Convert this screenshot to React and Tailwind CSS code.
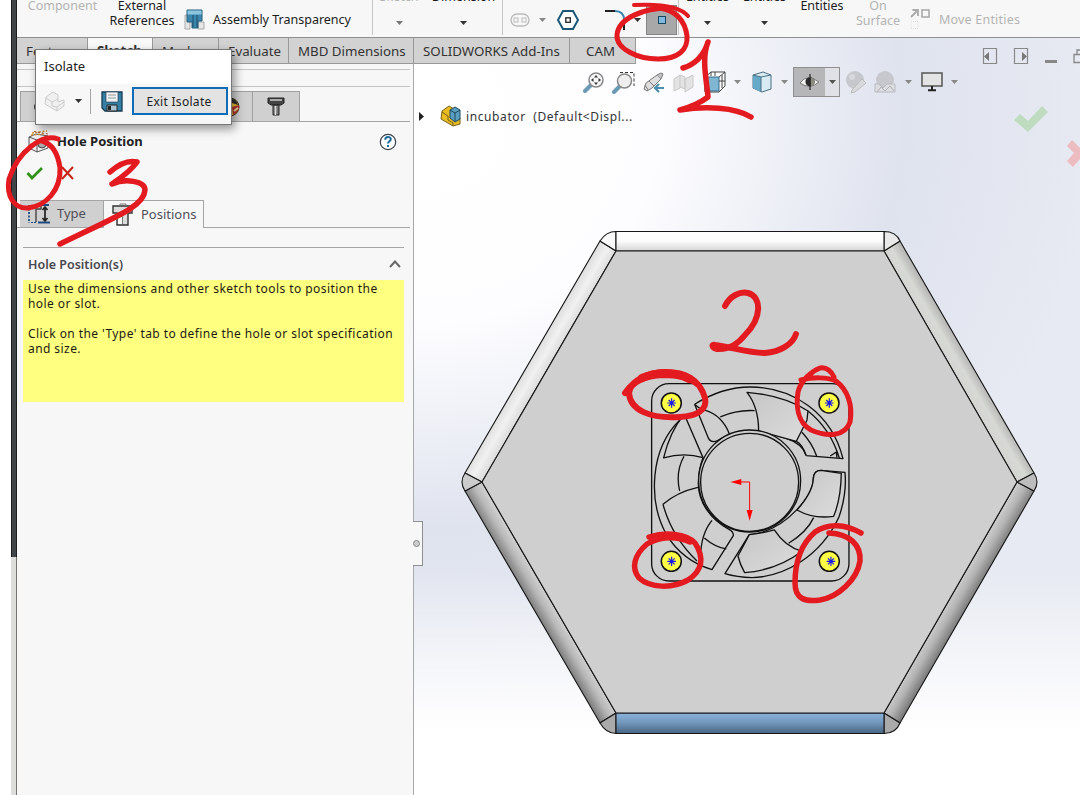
import React from "react";

const Caret = ({ c = "#333", className = "" }) => (
  <svg width="7" height="4" viewBox="0 0 7 4" className={"shrink-0 " + className}><path d="M0 0H7L3.5 4Z" fill={c} /></svg>
);

/* Ribbon cell: one or two caption lines, with an optional caret below */
const Cell = ({ w, children }) => <div className={"flex shrink-0 flex-col items-center whitespace-nowrap " + w}>{children}</div>;

function Ribbon() {
  return (
    <div className="flex h-[38px] shrink-0 overflow-hidden border-b border-[#8f8f8f] bg-[#f7f7f7] text-[12.5px] leading-[15px] text-[#1c1c1c]">
      <Cell w="w-[91px] -mt-[2px] text-[#b4b4b4]"><span>Component</span></Cell>
      <Cell w="w-[68px] -mt-[2px]"><span>External</span><span>References</span></Cell>
      <svg className="ml-[8px] mt-[8px] shrink-0" width="22" height="23" viewBox="0 0 22 23">
        <path d="M1 7h5v14H1zM14 14h6v7h-6z" fill="#e6e6e6" stroke="#aaa" />
        <path d="M3 2h15v11h-4v7H8v-6H3z" fill="#3d87ae" stroke="#245c7a" />
        <path d="M3.500 2.500h14v4h-14z" fill="#8cc6df" /><path d="M9 7v12M13 7v12" stroke="#1d4c66" />
      </svg>
      <span className="ml-[7px] mt-[12px] w-[136px] whitespace-nowrap">Assembly Transparency</span>
      <div className="ml-[23px] h-[35px] w-px shrink-0 bg-[#c6c6c6]" />
      <Cell w="w-[52px] -mt-[11px] text-[#b4b4b4]"><span>Sketch</span><Caret c="#777" className="mt-[17px]" /></Cell>
      <Cell w="w-[77px] -mt-[11px]"><span>Dimension</span><Caret className="mt-[17px]" /></Cell>
      <div className="h-[35px] w-px shrink-0 bg-[#c6c6c6]" />
      <div className="flex h-[40px] w-[143px] shrink-0 items-center pl-[7px]">
        <svg width="20" height="14" viewBox="0 0 20 14" fill="none" stroke="#bcbcbc"><rect x="1" y="1" width="18" height="12" rx="6" strokeWidth="1.4" /><rect x="4" y="5" width="4" height="4" /><rect x="12" y="5" width="4" height="4" /></svg>
        <Caret c="#888" className="ml-[9px]" />
        <svg className="ml-[11px]" width="22" height="20" viewBox="0 0 22 20"><path d="M6 1h10l5 9-5 9H6L1 10Z" fill="#fff" stroke="#1b5878" strokeWidth="2" /><rect x="8.8" y="7.8" width="4.5" height="4.5" fill="none" stroke="#222" strokeWidth="1.3" /></svg>
        <svg className="ml-[25px]" width="22" height="22" viewBox="0 0 22 22" fill="none"><path d="M1 2h10" stroke="#222" strokeWidth="2" /><path d="M11 2c6 0 9 3 9 9" stroke="#3b86ad" strokeWidth="2" /><path d="M20 11v10" stroke="#222" strokeWidth="2" /></svg>
        <Caret className="ml-[8px]" />
      </div>
      <div className="mt-[5px] flex h-[30px] w-[31px] shrink-0 items-center justify-center border border-[#858585] bg-[#a8a8a8]">
        <div className="h-[8px] w-[8px] border border-[#17465f] bg-[#7fb9dd]" />
      </div>
      <div className="ml-[1px] h-[35px] w-px shrink-0 bg-[#c6c6c6]" />
      <Cell w="w-[57px] -mt-[11px]"><span>Entities</span><Caret className="mt-[17px]" /></Cell>
      <Cell w="w-[57px] -mt-[11px]"><span>Entities</span><Caret className="mt-[17px]" /></Cell>
      <Cell w="w-[58px] -mt-[2px]"><span>Entities</span></Cell>
      <Cell w="w-[54px] -mt-[2px] text-[#b4b4b4]"><span>On</span><span>Surface</span></Cell>
      <svg className="ml-[4px] mt-[8px] shrink-0" width="24" height="23" viewBox="0 0 24 23" fill="none" stroke="#aaa"><path d="M2 9 8 3M3.500 2H9v6" strokeWidth="1.8" /><rect x="13" y="2" width="7" height="7" strokeWidth="1.6" /><rect x="2" y="13.500" width="7" height="7" stroke="#ddd" strokeDasharray="1 1" /></svg>
      <span className="ml-[6px] mt-[12px] whitespace-nowrap tracking-[0.2px] text-[#b4b4b4]">Move Entities</span>
    </div>
  );
}

const Tab = ({ w, active, children }) => (
  <div className={"flex h-full shrink-0 items-center whitespace-nowrap border-r pl-[9px] pt-[2px] " + w + (active ? " border-[#999] bg-[#f9f9f9] font-bold" : " border-b border-[#999] bg-[#d2d2d2]")}>{children}</div>
);

function TabBar() {
  return (
    <div className="flex h-[26px] shrink-0 text-[13.3px] text-[#333]">
      <Tab w="w-[71px]">Features</Tab>
      <Tab w="w-[65px]" active>Sketch</Tab>
      <Tab w="w-[66px]">Markup</Tab>
      <Tab w="w-[70px]">Evaluate</Tab>
      <Tab w="w-[125px]">MBD Dimensions</Tab>
      <Tab w="w-[156px]">SOLIDWORKS Add-Ins</Tab>
      <Tab w="w-[66px] !pl-[16px]">CAM</Tab>
    </div>
  );
}

function PropertyPanel() {
  return (
    <div className="relative flex w-[397px] shrink-0 flex-col border-r border-[#a9a9a9] bg-[#f7f7f7]">
      <div className="mr-[3px] h-[6px] border-b border-[#c4c4c4]" />
      <div className="mr-[3px] h-[17px] border-b border-[#c4c4c4]" />
      <div className="mr-[3px] flex h-[35px] items-end border-b border-[#a5a5a5] pl-[3px]">
        <div className="flex h-[30px] border border-b-0 border-[#a0a0a0] bg-[#d0d0d0]">
          <div className="flex w-[186px] items-center pl-[13px]"><div className="h-[12px] w-[12px] rounded-full bg-[#333]" /></div>
          <div className="flex w-[46px] items-center justify-center border-r border-[#a0a0a0]">
            <svg width="22" height="22" viewBox="0 0 22 22"><circle cx="11" cy="11" r="9" fill="#e7bd34" stroke="#39301e" /><path d="M13 11 20 9A9 9 0 0 1 14 19Z" fill="#b5342c" /><path d="M11 2A9 9 0 0 1 19 9L13 7Z" fill="#33302c" /><path d="M15 15l4-3" stroke="#f0dca0" strokeWidth="2" /></svg>
          </div>
          <div className="flex w-[46px] items-center justify-center">
            <svg width="18" height="20" viewBox="0 0 18 20"><path d="M1 1h16v5l-3 2H4L1 6Z" fill="#444" stroke="#222" /><path d="M3 3h12" stroke="#aaa" strokeWidth="2" /><path d="M6 8h6v10H6Z" fill="#777" stroke="#222" /><path d="M8.500 9v9" stroke="#ddd" strokeWidth="1.500" /></svg>
          </div>
        </div>
      </div>
      <div className="flex h-[39px] items-center pl-[11px] pr-[16px]">
        <svg width="22" height="23" viewBox="0 0 22 23" fill="none"><path d="M1 7 8 4 20 6v12l-11 4-8-4Z" fill="#eee" stroke="#555" /><path d="M1 7l8 3 11-4M9 10v12" stroke="#555" /><circle cx="14" cy="14" r="4" fill="#aaa" stroke="#444" /><path d="M4 3 19 1M3 5 17 4" stroke="#d09137" strokeWidth="1.500" strokeDasharray="2 1.500" /><path d="M6 1.500 20 4" stroke="#9c4f2e" strokeDasharray="2 2" /></svg>
        <span className="ml-[7px] flex-1 whitespace-nowrap pt-[1px] text-[13px] font-bold text-[#222]">Hole Position</span>
        <svg width="18" height="18" viewBox="0 0 18 18"><circle cx="9" cy="9" r="7.700" fill="#fff" stroke="#3a4146" strokeWidth="1.200" /><path d="M6.200 6.800c0-3.800 5.600-3.600 5.600-.5 0 2-2.800 2.100-2.800 4.300" fill="none" stroke="#1a6c99" strokeWidth="2" /><rect x="8" y="12" width="2" height="2" fill="#1a6c99" /></svg>
      </div>
      <div className="flex h-[39px] items-start gap-[17px] pl-[9px] pt-[5px]">
        <svg width="18" height="15" viewBox="0 0 18 15"><path d="M1.500 7 6 12 16 2" fill="none" stroke="#2f9217" strokeWidth="2.800" /></svg>
        <svg width="13" height="14" viewBox="0 0 13 14"><path d="M1 1 12 13M12 1 1 13" stroke="#c52213" strokeWidth="1.900" /></svg>
      </div>
      <div className="mr-[3px] flex h-[28px] border-b border-[#a5a5a5] pl-[3px] text-[13px] text-[#4f4f57]">
        <div className="flex w-[83px] items-center border-t border-[#a5a5a5] bg-[#d0d0d0] pl-[8px]">
          <svg width="22" height="20" viewBox="0 0 22 20" fill="none"><path d="M1 1v18" stroke="#1d4d80" strokeWidth="1.800" strokeDasharray="2 1.500" /><path d="M3 18.500h6" stroke="#1d4d80" strokeDasharray="2 1" /><path d="M8 18V5h5V1" stroke="#444" strokeWidth="1.400" /><path d="M10 18.500h12M11 1h10" stroke="#1d4d80" strokeWidth="1.800" /><path d="M17 4v12M14.500 6 17 3l2.500 3M14.500 14 17 17l2.500-3" stroke="#222" strokeWidth="1.700" /></svg>
          <span className="ml-[7px]">Type</span>
        </div>
        <div className="-mb-px flex w-[101px] items-center border border-b-0 border-[#a5a5a5] bg-[#f7f7f7] pl-[8px]">
          <svg width="21" height="23" viewBox="0 0 21 23"><path d="M1 3h19v7h-4v12H5V10H1Z" fill="#dcdcdc" stroke="#333" strokeWidth="1.400" /><path d="M8 3V1h6v2M5 10h11M10.500 10v11" stroke="#777" fill="none" /><path d="M6 10.500h4v10.500H6" fill="#f7f7f7" /></svg>
          <span className="ml-[8px]">Positions</span>
        </div>
      </div>
      <div className="ml-[6px] mr-[9px] mt-[19px] flex h-[33px] items-center justify-between border-t border-[#a5a5a5] pl-[5px] pr-[3px]">
        <span className="pt-[2px] text-[12.5px] font-semibold text-[#48484e]">Hole Position(s)</span>
        <svg width="12" height="8" viewBox="0 0 12 8"><path d="M1 7 6 1.500 11 7" fill="none" stroke="#666" strokeWidth="1.900" /></svg>
      </div>
      <div className="ml-[6px] mr-[9px] h-[122px] whitespace-nowrap bg-[#ffff80] pl-[5px] pt-[1px] text-[12px] leading-[15px] tracking-[0.43px] text-[#1c1c10]">
        <p>Use the dimensions and other sketch tools to position the</p>
        <p>hole or slot.</p>
        <p className="mt-[15px]">Click on the 'Type' tab to define the hole or slot specification</p>
        <p>and size.</p>
      </div>
      <div className="absolute -right-[10px] top-[457px] z-10 flex h-[45px] w-[10px] items-center border border-l-0 border-[#8f8f8f] bg-[#f7f7f7]">
        <div className="h-[7px] w-[7px] rounded-full border border-[#888] bg-[#ccc]" />
      </div>
    </div>
  );
}

function HeadsUpBar() {
  return (
    <div className="flex h-[32px] items-center pl-[169px]">
      <svg width="21" height="21" viewBox="0 0 21 21"><path d="M2 19 8 13" stroke="#6b9ab4" strokeWidth="4" strokeLinecap="round" /><circle cx="13" cy="8" r="7" fill="#f6f6f6" stroke="#888" strokeWidth="1.500" /><path d="M13 3 15 5.500h-4ZM13 13l2-2.500h-4ZM8 8l2.500-2v4ZM18 8l-2.500-2v4Z" fill="#333" /></svg>
      <svg className="ml-[8px]" width="23" height="23" viewBox="0 0 23 23"><path d="M8 1.500h14V15" stroke="#333" strokeDasharray="3 2" fill="none" /><path d="M2 21 8 15" stroke="#6b9ab4" strokeWidth="4" strokeLinecap="round" /><circle cx="12.500" cy="10" r="7" fill="#eee" stroke="#888" strokeWidth="1.500" /></svg>
      <svg className="ml-[8px]" width="22" height="21" viewBox="0 0 22 21"><path d="M1 17 3 11 14 3l4 4-9 9-5 3Z" fill="#dedede" stroke="#777" /><path d="M14 3l4-2 2 1-2 5M6 9l5 5M2 13l3 5" stroke="#777" fill="#c4c4c4" /><path d="M21 16h-9M16 12l-4 4 4 4" stroke="#4c8cad" strokeWidth="2.200" fill="none" /></svg>
      <svg className="ml-[8px]" width="22" height="21" viewBox="0 0 22 21"><path d="M1 7 7 3v13l-6 3ZM7 3l5 2v12l-5-2M12 7l8-4v12l-8 5Z" fill="#e3e3e3" stroke="#c9c9c9" /></svg>
      <svg className="ml-[9px]" width="22" height="23" viewBox="0 0 22 23"><path d="M1 6 7 1h14v14l-6 6H1Z" fill="#fff" stroke="#444" /><path d="M1 6h14v14H1Z" fill="#7fb6d1" stroke="#386b87" /><path d="M15 6 21 1M15 10h6M18 4v13M11 1v4M7 1v4" stroke="#444" fill="none" /></svg>
      <Caret c="#888" className="ml-[8px]" />
      <svg className="ml-[11px]" width="20" height="22" viewBox="0 0 20 22"><path d="M1 4 11 1l8 3v14l-9 3-9-4Z" fill="#d8eaf2" stroke="#4c7084" /><path d="M1 4l8 2v15l-8-4Z" fill="#66a9c9" /><path d="M1 4l8 2 10-2M9 6v15" stroke="#4c7084" fill="none" /></svg>
      <Caret c="#888" className="ml-[9px]" />
      <div className="ml-[5px] flex h-[30px] w-[47px] border border-[#8f8f8f]">
        <div className="flex w-[31px] items-center justify-center bg-[#b6b6b8]">
          <svg width="21" height="18" viewBox="0 0 21 18"><path d="M1 10Q8 0 20 9 11 17 1 10Z" fill="#f4f4f2" stroke="#777" /><circle cx="11" cy="8.800" r="4.600" fill="#2b2b2b" /><path d="M11.500 4.500a4.400 4.400 0 0 1 0 8.800" fill="#8a8a7e" /><path d="M11 1v16" stroke="#222" strokeWidth="1.200" /></svg>
        </div>
        <div className="flex flex-1 items-center justify-center bg-[#dfe1e7]"><Caret c="#555" /></div>
      </div>
      <svg className="ml-[4px]" width="24" height="24" viewBox="0 0 24 24"><circle cx="11" cy="10" r="9" fill="#c6c8cd" /><circle cx="8" cy="7" r="3" fill="#d6d8dd" /><path d="M8 20 18 9l4 4-11 9-4 1Z" fill="#d9dade" stroke="#bbb" /></svg>
      <svg className="ml-[5px]" width="24" height="24" viewBox="0 0 24 24"><circle cx="12" cy="10" r="9" fill="#c6c8cd" /><path d="M2 14h4l4 4 4-4h8v8H2Z" fill="#dcdee2" stroke="#b8babf" /><path d="M4 22l4-5 4 4 5-5 4 5" stroke="#b0b0b4" fill="none" /></svg>
      <Caret c="#888" className="ml-[8px]" />
      <svg className="ml-[9px]" width="22" height="20" viewBox="0 0 22 20"><rect x="1" y="1" width="20" height="13" fill="#e4e4e4" stroke="#555" strokeWidth="1.500" /><path d="M11 14v4M7 18.200h8" stroke="#222" strokeWidth="2" /></svg>
      <Caret c="#888" className="ml-[8px]" />
    </div>
  );
}

const Mark = ({ x, y, dx = 1 }) => (
  <g><circle cx={x} cy={y} r="30" fill="#ffff45" stroke="#111" strokeWidth="4.500" /><path d={`M${x - 13 + dx} ${y}h26M${x + dx} ${y - 14}v28M${x - 9 + dx} ${y - 9}l18 18M${x + 9 + dx} ${y - 9}l-18 18`} stroke="#1718e8" strokeWidth="3.500" /></g>
);

function Model() {
  return (
    <svg className="absolute inset-0" width="666" height="731" viewBox="414 64 666 731" fill="none">
      <defs>
        <linearGradient id="top" x1="0" y1="0" x2="0" y2="1"><stop stopColor="#fff" /><stop offset=".5" stopColor="#fbfbfb" /><stop offset="1" stopColor="#d4d4d4" /></linearGradient>
        <linearGradient id="bot" x1="0" y1="0" x2="0" y2="1"><stop stopColor="#8bb2da" /><stop offset=".45" stopColor="#7399be" /><stop offset="1" stopColor="#496581" /></linearGradient>
        <linearGradient id="ul" gradientUnits="userSpaceOnUse" x1="532" y1="357" x2="549" y2="367"><stop stopColor="#dedede" /><stop offset=".5" stopColor="#f1f1f1" /><stop offset="1" stopColor="#dcdcdc" /></linearGradient>
        <linearGradient id="ur" gradientUnits="userSpaceOnUse" x1="967" y1="357" x2="950" y2="367"><stop stopColor="#b6b7b5" /><stop offset=".5" stopColor="#d7d9d5" /><stop offset="1" stopColor="#d4d5d2" /></linearGradient>
        <linearGradient id="ll" gradientUnits="userSpaceOnUse" x1="532" y1="607" x2="549" y2="597"><stop stopColor="#7c7c7c" /><stop offset=".55" stopColor="#b8b8b8" /><stop offset="1" stopColor="#d2d2d2" /></linearGradient>
        <linearGradient id="lr" gradientUnits="userSpaceOnUse" x1="967" y1="607" x2="950" y2="597"><stop stopColor="#7c7c7c" /><stop offset=".55" stopColor="#b4b4b4" /><stop offset="1" stopColor="#cdcdcd" /></linearGradient>
        <linearGradient id="blade" x1="0" y1="0" x2="1" y2="1"><stop stopColor="#c6c6c6" /><stop offset="1" stopColor="#dcdcdc" /></linearGradient>
      </defs>
      <g stroke="#161616" strokeWidth="1.100" strokeLinejoin="round">
        <path d="M616 251 482 482 465 473 600 241Z" fill="url(#ul)" />
        <path d="M884 251 1017 482 1034 473 900 241Z" fill="url(#ur)" />
        <path d="M482 482 616 713 600 723 465 491Z" fill="url(#ll)" />
        <path d="M1017 482 884 713 900 723 1034 491Z" fill="url(#lr)" />
        <path d="M616 251 600 241Q606 231.500 616 231.500Z" fill="#fafafa" />
        <path d="M884 251 900 241Q896 231.500 884 231.500Z" fill="#e9e9e9" />
        <path d="M482 482 465 473Q459 482 465 491Z" fill="#ccc" />
        <path d="M1017 482 1034 473Q1040 482 1034 491Z" fill="#bdbdbd" />
        <path d="M616 713 600 723Q606 733.500 616 733.500Z" fill="#aaa" />
        <path d="M884 713 900 723Q896 733.500 884 733.500Z" fill="#aaa" />
        <path d="M616 231.500H884V251H616Z" fill="url(#top)" />
        <path d="M616 713H884V733.500H616Z" fill="url(#bot)" />
        <path d="M616 251H884L1017 482 884 713H616L482 482Z" fill="#cfcfcf" />
      </g>
      <g transform="translate(640.3 370.3) scale(.33333)" stroke="#111" strokeWidth="4" strokeLinejoin="round">
        <rect x="34" y="40" width="592" height="592" rx="52" />
        <path d="M163 102Q245 50 330 50C460 50 575 130 608 265L498 256C490 230 470 215 440 205M163 102 205 205Q213 219 232 211C262 192 290 180 328 180Q380 184 440 205L468 213" />
        <path d="M163 102Q178 117 196 120Q245 135 267 190M240 140Q290 118 343 121" />
        <path d="M320 66Q355 110 355 182L468 213 500 150 503 122Q430 75 320 66Z" fill="url(#blade)" />
        <path d="M503 122Q570 175 597 263M468 213Q485 220 497 255M485 186Q515 218 529 257M570 257 588 245 590 262" />
        <path d="M118 150C30 235 22 390 78 492Q125 570 215 598L279 496Q280 484 266 477C208 445 175 395 174 340Q175 295 188 262L138 146" />
        <path d="M131 133Q88 185 70 263Q130 245 188 262M131 258Q105 305 118 362M68 402Q110 365 173 351M68 402Q95 500 170 572M181 575Q178 495 215 450" />
        <path d="M192 503Q225 531 258 536" />
        <path d="M254 610 327 493C390 488 435 455 470 418Q520 365 519 325Q520 300 542 300L614 306Q620 370 596 440C540 560 430 620 335 622Q290 621 254 610Z" />
        <path d="M293 557 327 493Q370 488 402 479Q435 530 485 543Q410 600 313 607Q300 585 293 557Z" fill="url(#blade)" />
        <path d="M470 419Q520 447 580 438Q602 385 603 309L542 300Q520 300 519 325Q518 365 470 419Z" fill="url(#blade)" />
        <path d="M445 519Q500 485 520 442" />
        <circle cx="328" cy="332" r="153" fill="#cfcfcf" /><circle cx="328" cy="336" r="147" />
        <path d="M328 335H295M328 335V425" stroke="#f00" strokeWidth="3" />
        <path d="M271 335 303 326V344ZM328 451 319 419H337Z" fill="#f00" stroke="none" />
        <Mark x={93} y={98} /><Mark x={566} y={98} /><Mark x={93} y={573} /><Mark x={567} y={573} dx={5} />
      </g>
      <path d="M1014 120 1020 114 1028 121 1042 106 1048 112 1028 132Z" fill="#bfdcc1" />
      <path d="M1067 146 1072 140 1080 148 1088 140V167L1080 159 1073 167 1067 161 1074 153Z" fill="#ecbcc0" />
    </svg>
  );
}

function Viewport() {
  return (
    <div className="relative min-w-0 flex-1 overflow-hidden">
      <Model />
      <div className="relative pt-[2px]"><HeadsUpBar /></div>
      <div className="relative flex h-[36px] items-center pl-[5px]">
        <svg width="6" height="9" viewBox="0 0 6 9"><path d="M0 0 5 4.500 0 9Z" fill="#222" /></svg>
        <svg className="ml-[15px]" width="22" height="22" viewBox="0 0 22 22"><path d="M2 6 9 1l5 3v8l6 1v6l-7 2-12-7Z" fill="#e9bd22" stroke="#77601a" /><path d="M2 7l6 4v4l5 3v3" stroke="#77601a" fill="none" /><path d="M10 5l5-3 5 3v9l-5 3-5-4Z" fill="#5a9fc2" stroke="#1e485e" /><path d="M10 5l5 3 5-3M15 8v8" stroke="#1e485e" fill="none" /></svg>
        <span className="ml-[4px] mt-[2px] whitespace-pre text-[12px] tracking-[0.6px] text-[#333]">incubator  (Default&lt;Displ...</span>
      </div>
    </div>
  );
}

function WindowButtons() {
  return (
    <svg className="absolute left-[965px] top-[48px]" width="98" height="17" viewBox="982 48 98 17" fill="none" stroke="#888">
      <path d="M983.500 48.500h13v15h-13ZM1014.500 48.500h13v15h-13Z" strokeWidth="1.200" />
      <path d="M989 52v9l-5-4.500ZM1022 52v9l5-4.500Z" fill="#777" stroke="none" />
      <path d="M1045 61.500h12" strokeWidth="3" /><path d="M1074 54.500h8v8h-8ZM1077 54v-4h5" strokeWidth="1.300" />
    </svg>
  );
}

function IsolateDialog() {
  return (
    <div className="absolute left-[35px] top-[49px] flex h-[76px] w-[197px] flex-col border border-[#777] bg-white shadow-[3px_4px_9px_rgba(0,0,0,0.4)]">
      <div className="flex h-[34px] items-center pl-[8px] text-[13px] text-[#222]">Isolate</div>
      <div className="flex flex-1 items-center bg-[#f7f7f7] pb-[6px] pl-[8px]">
        <svg width="22" height="21" viewBox="0 0 22 21"><path d="M2 6 9 1l5 3v7l6-2v6l-7 5-12-7Z" fill="#f0f0f0" stroke="#ccc" /><path d="M2 7l6 4v4l5 1v4M13 16l7-5M8 11l6-3" stroke="#ccc" fill="none" /></svg>
        <Caret className="ml-[9px]" />
        <div className="ml-[8px] h-[25px] w-px bg-[#a5a5a5]" />
        <svg className="ml-[10px]" width="22" height="21" viewBox="0 0 22 21"><path d="M1 1h20v19H4L1 17Z" fill="#347fa5" stroke="#173d52" strokeWidth="1.300" /><path d="M5 1h12v10H5Z" fill="#eef2f4" stroke="#345" strokeWidth=".7" /><path d="M7 4h8M7 7h8" stroke="#999" /><path d="M6 14h10v6H6Z" fill="#a9c4d0" stroke="#222" /><path d="M7 15h3v4H7Z" fill="#222" /></svg>
        <div className="ml-[9px] flex h-[28px] w-[96px] items-center justify-center border-2 border-[#0f6cb6] bg-[#e3e3e3] pr-[2px] pt-[2px] text-[12px] tracking-[0.3px] text-[#222]">Exit Isolate</div>
      </div>
    </div>
  );
}

function Ink() {
  return (
    <svg className="pointer-events-none absolute inset-0" width="1080" height="795" viewBox="0 0 1080 795" fill="none" stroke="#e31b20" strokeWidth="6" strokeLinecap="round" strokeLinejoin="round">
      <path d="M634 5C653 4 679 5 688 16" strokeWidth="4" />
      <path d="M668 8C645 8 618 18 617 35C616 49 638 59 658 59C678 59 688 50 687 36C685 21 677 11 660 8" strokeWidth="5" />
      <path d="M683 68C696 64 704 55 708 42C701 59 707 82 708 97C700 103 691 107 680 110C705 106 735 107 751 117" strokeWidth="5.500" />
      <path d="M725 306C730 296 740 291 748 293C762 297 762 318 745 335C737 345 728 350 717 349C712 348 711 344 715 345C730 347 750 353 765 353C780 352 793 344 796 334" />
      <path d="M110 172C119 164 129 160 137 162C130 172 119 179 112 184C125 178 145 181 145 190C144 207 115 217 60 244" strokeWidth="5.500" />
      <path d="M58 139C43 133 18 151 9 179C6 196 14 209 28 208C46 206 61 190 60 168C58 154 53 144 42 141" strokeWidth="5" />
      <path d="M625 393C636 378 648 373 663 372C685 371 700 380 705 398C708 411 695 416 680 417C650 419 630 410 629 393C630 382 645 376 663 375C678 375 690 378 697 384" />
      <path d="M642 378C655 372 675 371 689 379" strokeWidth="8" />
      <path d="M801 380C812 377 828 377 836 381C848 390 853 406 850 422C845 437 827 437 811 430C797 422 796 405 798 392C801 380 812 371 820 368C826 367 831 371 834 377" strokeWidth="5" />
      <path d="M649 537C665 532 686 533 695 543C705 558 702 571 688 580C672 589 650 588 639 578C631 568 634 555 647 544C660 536 677 536 690 542" strokeWidth="5.500" />
      <path d="M861 533C845 524 828 523 815 532C800 545 795 565 795 583C795 599 805 602 820 600C838 597 857 580 860 561C861 545 850 534 829 533" strokeWidth="5.500" />
    </svg>
  );
}

export default function App() {
  return (
    <div className="relative flex h-[795px] w-[1080px] overflow-hidden bg-white font-['Noto_Sans','Open_Sans',sans-serif]">
      <div className="flex w-[17px] shrink-0 flex-col pl-[11px]">
        <div className="h-[557px] border-x border-[#1b1d1f] bg-[#424547]" />
        <div className="flex-1 border-r border-[#77736c] bg-[#dddedb]" />
      </div>
      <div className="relative flex min-w-0 flex-1 flex-col bg-[linear-gradient(to_bottom,transparent_72%,#fff_92%),radial-gradient(ellipse_760px_640px_at_400px_120px,#fff_0%,#fdfdff_32%,#dfe3ee_64%,#e7eaf2_90%)]">
        <Ribbon />
        <TabBar />
        <div className="flex min-h-0 flex-1"><PropertyPanel /><Viewport /></div>
        <WindowButtons />
      </div>
      <IsolateDialog />
      <Ink />
    </div>
  );
}
